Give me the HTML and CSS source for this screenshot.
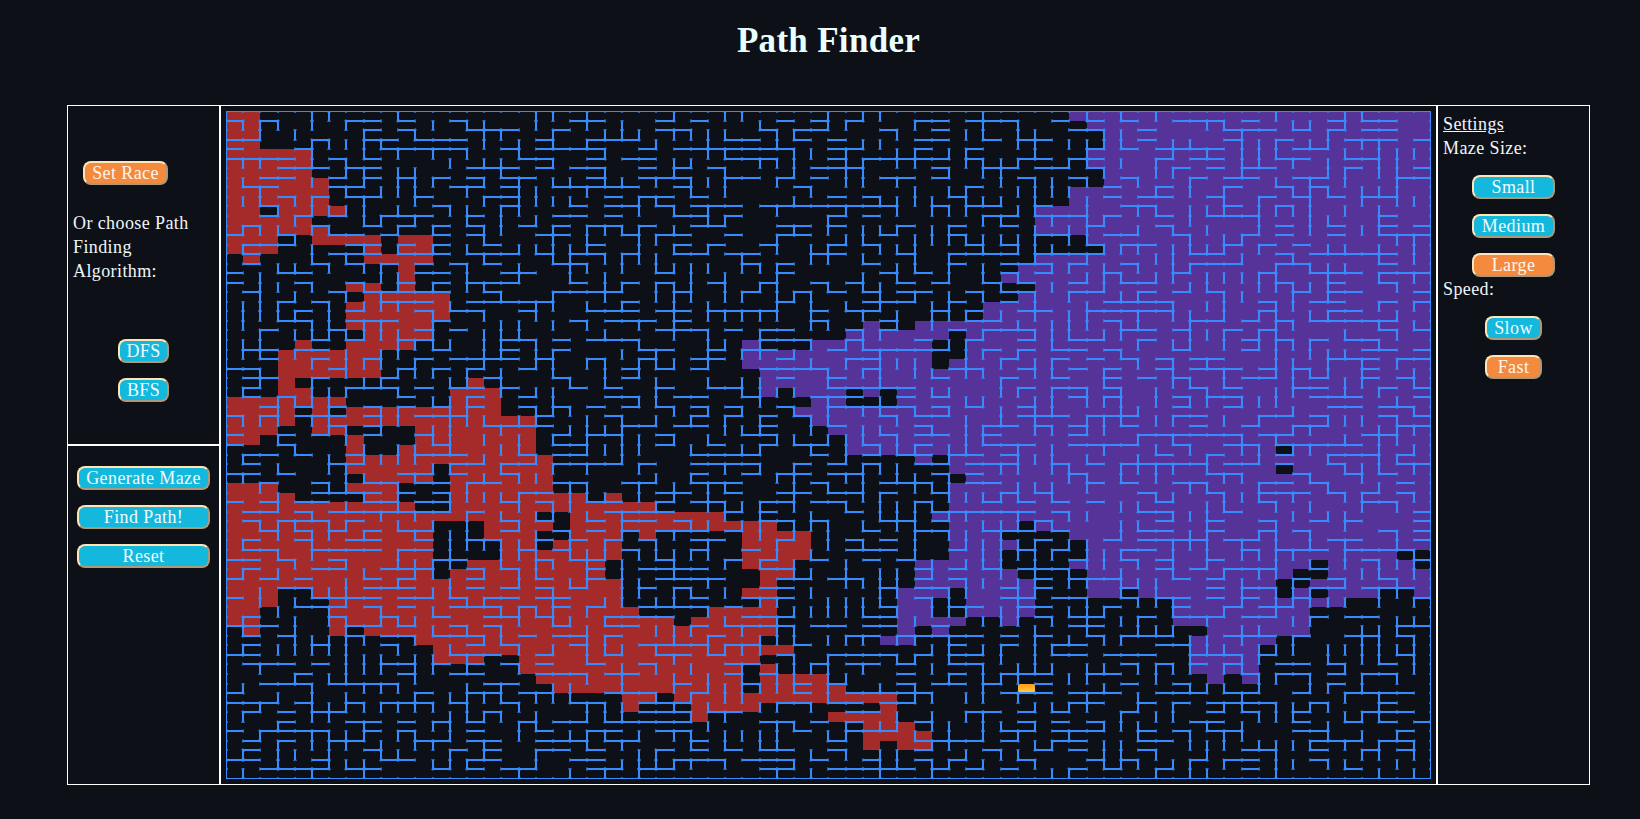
FILE: index.html
```html
<!DOCTYPE HTML>
<html lang="en-US">
	<head>
		<meta charset="UTF-8">
		<title>Path Finder</title>
		<link rel="stylesheet" href="styles.css">
	</head>
	<body>
		<h1 class="title">Path Finder</h1>
		<div class="app">
			<div class="side">
				<div class="panel panel-race">
					<button class="btn btn-orange btn-race">Set Race</button>
					<p class="label label-choose">Or choose Path Finding Algorithm:</p>
					<div class="stack stack-algo">
						<button class="btn btn-algo">DFS</button>
						<button class="btn btn-algo">BFS</button>
					</div>
				</div>
				<div class="panel panel-actions">
					<div class="stack">
						<button class="btn btn-wide">Generate Maze</button>
						<button class="btn btn-wide">Find Path!</button>
						<button class="btn btn-wide">Reset</button>
					</div>
				</div>
			</div>
			<div class="panel panel-maze">
				<div id="maze" class="maze"></div>
			</div>
			<div class="panel panel-settings">
				<p class="label settings-head"><u>Settings</u></p>
				<p class="label">Maze Size:</p>
				<div class="stack stack-size">
					<button class="btn btn-size">Small</button>
					<button class="btn btn-size">Medium</button>
					<button class="btn btn-size btn-orange">Large</button>
				</div>
				<p class="label">Speed:</p>
				<div class="stack stack-speed">
					<button class="btn btn-speed">Slow</button>
					<button class="btn btn-speed btn-orange">Fast</button>
				</div>
			</div>
		</div>
		<script src="script.js"></script>
	</body>
</html>
```

FILE: styles.css
```css
body {
	margin: 0;
	padding: 0 50px 0 67px;
	background: #0d1117;
	color: #f0f6fc;
	font-family: "Liberation Serif", serif;
	font-size: 18px;
	letter-spacing: 0.4px;
}
.title {
	height: 80px;
	margin: 0 0 25px;
	line-height: 82px;
	text-align: center;
	font-size: 35px;
	letter-spacing: 0.3px;
	color: #eaffff;
}
.app {
	display: grid;
	grid-template-columns: 153px 1217px 153px;
	height: 680px;
}
.side {
	display: grid;
	grid-template-rows: 1fr 1fr;
}
.panel {
	border: 1px solid #fff;
	box-sizing: border-box;
	min-width: 0;
}
.panel-race {
	padding: 55px 5px 0;
}
.panel-actions {
	padding-top: 20px;
}
.panel-maze {
	padding: 5px;
}
.panel-settings {
	padding: 5px;
}
.label {
	margin: 0;
	line-height: 24px;
}
.settings-head {
	margin-top: 1px;
}
.label-choose {
	margin-top: 26px;
}
.stack {
	display: flex;
	flex-direction: column;
	align-items: center;
	gap: 15px;
}
.stack-algo {
	margin-top: 56px;
}
.stack-size {
	margin-top: 15px;
}
.stack-speed {
	margin-top: 15px;
}
.btn {
	height: 24px;
	padding: 0;
	border: 2px outset moccasin;
	border-radius: 8px;
	background: #14b8dc;
	color: #f0fbff;
	font-family: inherit;
	font-size: 18px;
	letter-spacing: 0.4px;
	line-height: 18px;
}
.btn-orange {
	background: #f38a3e;
	color: #fff5ea;
}
.btn-race {
	display: block;
	width: 85px;
	margin-left: 10px;
}
.btn-algo {
	width: 51px;
}
.btn-wide {
	width: 133px;
}
.btn-size {
	width: 83px;
}
.btn-speed {
	width: 57px;
}
.maze {
	display: grid;
	grid-template-columns: repeat(70, 1fr);
	grid-template-rows: repeat(70, 1fr);
	height: 100%;
	overflow: hidden;
}
.cell {
	position: relative;
}
.cell::before {
	content: "";
	position: absolute;
	inset: -1px;
	z-index: 1;
	border: 0 solid #388bfd;
	border-radius: 3px;
}
.wt::before { border-top-width: 2px; }
.wr::before { border-right-width: 2px; }
.wb::before { border-bottom-width: 2px; }
.wl::before { border-left-width: 2px; }
.red {
	background: #a52a2a;
}
.purple {
	background: #553399;
}
.goal {
	background: linear-gradient(#ff9a1a, #ffd23f);
}
```

FILE: script.js
```js
const SIZE = 70;

// cells reached by each search, one string of column runs per row
const redRuns = [
	"0-1", "0-1", "0-1", "0-1", "0-4", "0-4", "0-4", "0-5", "0-5", "0-5",
	"0-1 3-6", "0-4", "0-5", "0-2 5-8 10-11", "0-2 8 10-11", "1 8-11", "10", "10", "7-8 10", "8-12",
	"7-12", "7-12", "7-11", "8-11", "4 7-10", "3-8", "3-8", "3-8", "3 14", "3-4 13-15",
	"0-6 13-15", "0-3 5 7-15", "0-3 5-17", "0-2 5-6 11-17", "0-1 7 11-17", "7 10-17", "7-18", "7-11 13-18", "8-11 13-18", "0-2 7-9 13-18",
	"0-3 8-9 13-20 22", "0-10 13-24", "0-17 20-28", "0-11 15-18 20-31", "0-11 15-17 20-22 24 30-33", "0-11 16-17 19-22 30-33", "0-11 16-22 30-33", "0-11 14-21 30-32", "0-11 13-21 31-32", "0-22 31",
	"0-2 5-22 30-31", "0-2 6-22 31", "0-1 6-23 28-31", "0-1 6-25 27-31", "1 6 8-31", "11-30", "12-32", "12-14 17-30", "17-29 31", "18-29 31-34",
	"19-29 31-35", "23-24 26-38", "23 27-30 38", "27 35-38", "37-39", "37-40", "37 39-40"
];
const purpleRuns = [
	"49-69", "50-69", "51-69", "51-69", "50-69", "50-69", "51-69", "51-69", "49-69", "49-69",
	"47-69", "47-69", "47-69", "50-69", "51-69", "47-69", "46-69", "45-69", "47-69", "46-69",
	"44-69", "44-69", "37 40-69", "36-41 43-69", "30 34-40 43-69", "30-40 43-69", "30-40 42-69", "31-69", "31-69", "31 33-35 37 39-69",
	"34-35 39-69", "33-69", "34-69", "35-69", "36-69", "36-60 62-69", "40 42-69", "42-60 62-69", "43-69", "42-69",
	"42-69", "42-69", "41-69", "42-45 47-69", "42-44 49-69", "42-45 50-69", "42-44 50-67", "40-44 49-62 64-68", "40-45 50-61 64-69", "40-46 50-60 63-69",
	"39-41 43-46 50-51 53-60 62 64-66 69", "39-40 43-46 55-64", "39-40 43-46 55-62", "39-42 45 55-62", "39 41 57-62", "38-39 56-60", "56-59", "56-59", "56-59", "57 59"
];
const goal = [60, 46];

function inRuns(runs, row, col) {
	if (!runs[row]) return false;
	return runs[row].split(" ").some(run => {
		const [from, to] = run.split("-").map(Number);
		return col >= from && col <= (to === undefined ? from : to);
	});
}

// small seeded generator so the maze is the same on every load
let seed = 20240;
function random() {
	seed = (seed + 0x6d2b79f5) | 0;
	let t = Math.imul(seed ^ (seed >>> 15), 1 | seed);
	t = (t + Math.imul(t ^ (t >>> 7), 61 | t)) ^ t;
	return ((t ^ (t >>> 14)) >>> 0) / 4294967296;
}

// randomized kruskal, then a few extra walls come out so the maze has loops
function buildWalls() {
	const parent = [];
	const edges = [];
	const right = new Set();
	const bottom = new Set();
	for (let i = 0; i < SIZE * SIZE; i++) {
		parent.push(i);
		if ((i + 1) % SIZE !== 0) { edges.push([i, i + 1]); right.add(i); }
		if (i + SIZE < SIZE * SIZE) { edges.push([i, i + SIZE]); bottom.add(i); }
	}
	function find(i) {
		while (parent[i] !== i) {
			parent[i] = parent[parent[i]];
			i = parent[i];
		}
		return i;
	}
	for (let i = edges.length - 1; i > 0; i--) {
		const j = Math.floor(random() * (i + 1));
		[edges[i], edges[j]] = [edges[j], edges[i]];
	}
	edges.forEach(([a, b]) => {
		const rootA = find(a);
		const rootB = find(b);
		if (rootA !== rootB) parent[rootA] = rootB;
		else if (random() > 0.2) return;
		if (b === a + 1) right.delete(a);
		else bottom.delete(a);
	});
	return { right, bottom };
}

const { right, bottom } = buildWalls();
const maze = document.getElementById("maze");
for (let row = 0; row < SIZE; row++) {
	for (let col = 0; col < SIZE; col++) {
		const i = row * SIZE + col;
		const cell = document.createElement("div");
		cell.className = "cell";
		if (row === 0 || bottom.has(i - SIZE)) cell.classList.add("wt");
		if (col === SIZE - 1 || right.has(i)) cell.classList.add("wr");
		if (row === SIZE - 1 || bottom.has(i)) cell.classList.add("wb");
		if (col === 0 || right.has(i - 1)) cell.classList.add("wl");
		if (row === goal[0] && col === goal[1]) cell.classList.add("goal");
		else if (inRuns(redRuns, row, col)) cell.classList.add("red");
		else if (inRuns(purpleRuns, row, col)) cell.classList.add("purple");
		maze.appendChild(cell);
	}
}
```
